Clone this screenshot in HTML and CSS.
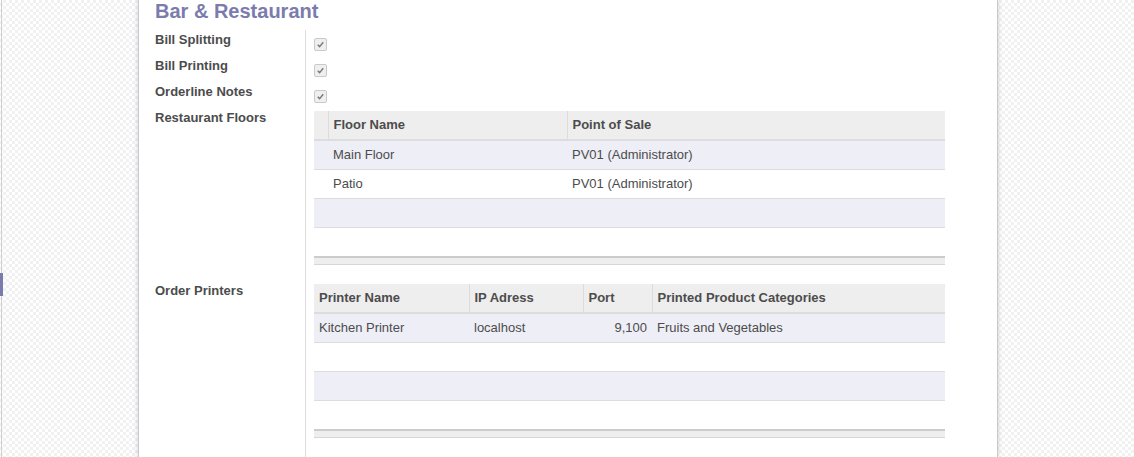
FILE: index.html
```html
<!DOCTYPE html>
<html>
<head>
<meta charset="utf-8">
<link rel="stylesheet" href="styles.css">
</head>
<body>
<div class="indicator"></div>
<div class="content">
  <div class="sheet">
    <h1 class="title">Bar &amp; Restaurant</h1>
    <div class="group">
      <div class="label">Bill Splitting</div>
      <div class="field"><span class="check"><svg viewBox="0 0 12 12" width="12" height="12"><path d="M3 6.3 L5 8.3 L9 3.6" fill="none" stroke="#7a7a7a" stroke-width="1.6"/></svg></span></div>

      <div class="label">Bill Printing</div>
      <div class="field"><span class="check"><svg viewBox="0 0 12 12" width="12" height="12"><path d="M3 6.3 L5 8.3 L9 3.6" fill="none" stroke="#7a7a7a" stroke-width="1.6"/></svg></span></div>

      <div class="label">Orderline Notes</div>
      <div class="field"><span class="check"><svg viewBox="0 0 12 12" width="12" height="12"><path d="M3 6.3 L5 8.3 L9 3.6" fill="none" stroke="#7a7a7a" stroke-width="1.6"/></svg></span></div>

      <div class="label">Restaurant Floors</div>
      <div class="field field-table">
        <table class="list">
          <colgroup><col class="c-handle"><col class="c-floor"><col></colgroup>
          <thead>
            <tr><th class="handle"></th><th>Floor Name</th><th>Point of Sale</th></tr>
          </thead>
          <tbody>
            <tr class="odd"><td></td><td>Main Floor</td><td>PV01 (Administrator)</td></tr>
            <tr><td></td><td>Patio</td><td>PV01 (Administrator)</td></tr>
            <tr class="odd"><td></td><td></td><td></td></tr>
            <tr><td></td><td></td><td></td></tr>
          </tbody>
          <tfoot><tr><td></td><td></td><td></td></tr></tfoot>
        </table>
      </div>

      <div class="label label-second">Order Printers</div>
      <div class="field field-table second">
        <table class="list">
          <colgroup><col class="c-name"><col class="c-ip"><col class="c-port"><col></colgroup>
          <thead>
            <tr><th>Printer Name</th><th>IP Adress</th><th>Port</th><th>Printed Product Categories</th></tr>
          </thead>
          <tbody>
            <tr class="odd"><td>Kitchen Printer</td><td>localhost</td><td class="num">9,100</td><td>Fruits and Vegetables</td></tr>
            <tr><td></td><td></td><td></td><td></td></tr>
            <tr class="odd"><td></td><td></td><td></td><td></td></tr>
            <tr><td></td><td></td><td></td><td></td></tr>
          </tbody>
          <tfoot><tr><td></td><td></td><td></td><td></td></tr></tfoot>
        </table>
      </div>
      <div class="label filler"></div>
      <div class="field filler"></div>
    </div>
  </div>
</div>
</body>
</html>
```
FILE: styles.css
```css
html, body {
  margin: 0;
  padding: 0;
  height: 100%;
  overflow: hidden;
}
body {
  font-family: "Liberation Sans", Arial, sans-serif;
  font-size: 13px;
  color: #4c4c4c;
  background-color: #fff;
  background-image: repeating-conic-gradient(#f1f1f1 0 25%, #ffffff 0 50%);
  background-size: 6px 6px;
  position: relative;
}
.indicator {
  position: absolute;
  left: 0;
  top: 273px;
  width: 3px;
  height: 23px;
  background: #7c7bad;
}
.content {
  margin-left: 1px;
  border-left: 1px solid #cfcfcf;
  height: 100%;
}
.sheet {
  width: 860px;
  margin: 0 auto;
  background: #fff;
  border-left: 1px solid #c9c9d3;
  border-right: 1px solid #c9c9c9;
  box-shadow: 0 0 5px rgba(0, 0, 0, 0.18);
  height: 100%;
  padding: 0 16px;
  box-sizing: border-box;
}
.title {
  margin: 0;
  padding: 0 0 7px 0;
  font-size: 20px;
  line-height: 23px;
  font-weight: bold;
  color: #7c7bad;
}
.group {
  display: grid;
  grid-template-columns: 151px 639px;
}
.label {
  box-sizing: border-box;
  border-right: 1px solid #dddddd;
  font-weight: bold;
  line-height: 18px;
  padding-top: 1px;
  padding-bottom: 7px;
}
.label-second {
  padding-top: 0;
}
.field {
  padding-left: 8px;
  min-height: 26px;
}
.check {
  display: block;
  width: 11px;
  height: 11px;
  margin-top: 8px;
  border: 1px solid #c9c9c9;
  border-radius: 2px;
  background: #efefef;
}
.check svg {
  display: block;
  width: 11px;
  height: 11px;
}
.field-table {
  padding-top: 3px;
  padding-bottom: 17px;
}
.second {
  padding-top: 2px;
}
.filler {
  height: 200px;
}
.list {
  width: 631px;
  border-collapse: collapse;
  table-layout: fixed;
}
.c-handle { width: 14px; }
.c-floor { width: 239px; }
.c-name { width: 155px; }
.c-ip { width: 114px; }
.c-port { width: 69px; }
.list th {
  background: #eeeeee;
  height: 27px;
  padding: 0 5px 1px;
  text-align: left;
  font-weight: bold;
  border-left: 1px solid #dcdcdc;
  border-bottom: 2px solid #dddddd;
  white-space: nowrap;
}
.list th:first-child {
  border-left: none;
}
.list td {
  height: 27px;
  padding: 0 5px 1px;
  border-bottom: 1px solid #dddddd;
  white-space: nowrap;
}
.list tbody tr.odd td {
  background: #eeeef6;
}
.list td.num {
  text-align: right;
}
.list tfoot td {
  height: 6px;
  background: #eeeeee;
  border-top: 2px solid #cccccc;
  border-bottom: 1px solid #d6d6d6;
  padding: 0;
}
```
